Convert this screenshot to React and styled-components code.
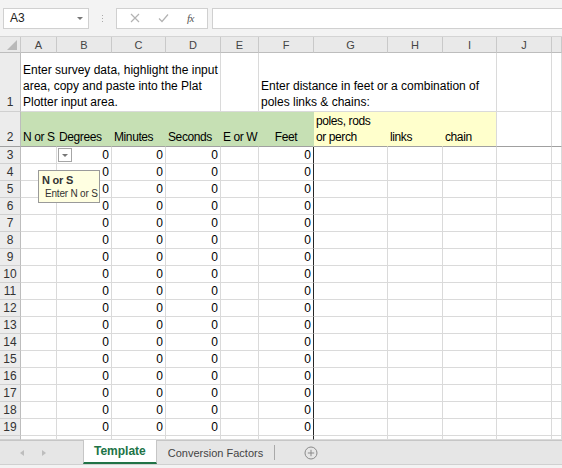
import styled, { createGlobalStyle } from 'styled-components'

const GlobalStyle = createGlobalStyle`
  html, body { margin: 0; padding: 0; background: #fff; }
  body { font-family: "Liberation Sans", Arial, sans-serif; }
`;

const Window = styled.div`
  width: 562px;
  height: 468px;
  overflow: hidden;
  display: flex;
  flex-direction: column;
  background: #fff;
`;

// ---- formula bar ----
const FormulaBar = styled.div`
  height: 37px;
  flex: none;
  box-sizing: border-box;
  background: #f3f3f3;
  border-bottom: 1px solid #d4d4d4;
  display: flex;
  align-items: center;
  padding-left: 3px;
`;

const NameBox = styled.div`
  width: 86px;
  height: 21px;
  box-sizing: border-box;
  background: #fff;
  border: 1px solid #d0d0d0;
  display: flex;
  align-items: center;
  justify-content: space-between;
  padding: 0 5px 0 6px;
  font-size: 12px;
  color: #222;
`;

const Caret = styled.span`
  width: 0;
  height: 0;
  border-left: 3px solid transparent;
  border-right: 3px solid transparent;
  border-top: 3px solid #777;
`;

const Grip = styled.div`
  width: 27px;
  display: flex;
  flex-direction: column;
  align-items: center;
  gap: 2px;
  span { width: 1px; height: 1px; background: #aaa; }
`;

const FxBox = styled.div`
  width: 92px;
  height: 21px;
  box-sizing: border-box;
  background: #fff;
  border: 1px solid #d0d0d0;
  display: flex;
  align-items: center;
  justify-content: space-around;
  padding: 0 4px;
`;

const FxLabel = styled.span`
  font-family: "Liberation Serif", serif;
  font-style: italic;
  font-size: 11px;
  color: #555;
  letter-spacing: -0.5px;
`;

const FormulaInput = styled.div`
  flex: 1;
  height: 21px;
  margin-left: 4px;
  box-sizing: border-box;
  background: #fff;
  border: 1px solid #d0d0d0;
  border-right: none;
`;

// ---- sheet grid ----
const Sheet = styled.div`
  position: relative;
  flex: 1;
  display: grid;
  grid-template-columns: 21px 36px 55px 54px 55px 38px 55px 74px 55px 54px 55px 1fr;
  grid-template-rows: 16px 59px 35px repeat(17, 17px) 1fr;
  overflow: hidden;
  font-size: 12px;
`;

const ColHead = styled.div`
  box-sizing: border-box;
  background: #e9e9e9;
  border-right: 1px solid #c9c9c9;
  border-bottom: 1px solid #bdbdbd;
  display: flex;
  align-items: center;
  justify-content: center;
  font-size: 11px;
  color: #444;
`;

const Corner = styled(ColHead)`
  justify-content: flex-end;
  align-items: flex-end;
  padding: 0 3px 2px 0;
`;

const CornerTri = styled.span`
  width: 0;
  height: 0;
  border-left: 10px solid transparent;
  border-bottom: 10px solid #b9b9b9;
`;

const RowHead = styled.div`
  box-sizing: border-box;
  background: #ececec;
  border-right: 1px solid #bdbdbd;
  border-bottom: 1px solid ${p => (p.$freeze ? '#a0a0a0' : '#d0d0d0')};
  display: flex;
  align-items: ${p => (p.$bottom ? 'flex-end' : 'center')};
  justify-content: center;
  padding-bottom: ${p => (p.$bottom ? '1px' : '0')};
  line-height: 16px;
  color: #333;
`;

const Cell = styled.div`
  grid-column: span ${p => p.$span || 1};
  box-sizing: border-box;
  min-width: 0;
  background: ${p => p.$fill || '#fff'};
  border-right: 1px solid ${p => p.$edge || p.$fill || '#dadada'};
  border-bottom: 1px solid ${p => (p.$freeze ? '#a0a0a0' : p.$fill || '#dadada')};
  display: flex;
  flex-direction: column;
  justify-content: ${p => (p.$middle ? 'center' : 'flex-end')};
  align-items: ${p => p.$align || 'flex-start'};
  padding: 0 2px 1px 2px;
  line-height: 16px;
  letter-spacing: ${p => (p.$tight ? '-0.4px' : 'normal')};
  color: #000;
  white-space: nowrap;
  overflow: visible;
`;

const ValidationArrow = styled.div`
  position: absolute;
  left: 58px;
  top: 111px;
  width: 14px;
  height: 14px;
  box-sizing: border-box;
  background: #fff;
  border: 1px solid #a6a6a6;
  display: flex;
  align-items: center;
  justify-content: center;
`;

const Tooltip = styled.div`
  position: absolute;
  left: 38px;
  top: 133px;
  width: 62px;
  height: 33px;
  box-sizing: border-box;
  background: #ffffe1;
  border: 1px solid #9a9a9a;
  padding: 2px 0 0 3px;
  font-size: 10px;
  line-height: 14px;
  letter-spacing: -0.2px;
  color: #333;
  white-space: nowrap;
`;

const TipTitle = styled.div`
  font-weight: bold;
  font-size: 11px;
`;

const TipBody = styled.div`
  padding-left: 3px;
`;

// ---- sheet tabs ----
const TabBar = styled.div`
  height: 24px;
  flex: none;
  box-sizing: border-box;
  background: #e6e6e6;
  border-top: 1px solid #c6c6c6;
  display: flex;
  align-items: stretch;
`;

const NavArrows = styled.div`
  width: 83px;
  display: flex;
  align-items: center;
  padding-left: 20px;
  gap: 18px;
  box-sizing: border-box;
  span {
    width: 0;
    height: 0;
    border-top: 3px solid transparent;
    border-bottom: 3px solid transparent;
  }
  span:first-child { border-right: 4px solid #bdbdbd; }
  span:last-child { border-left: 4px solid #bdbdbd; }
`;

const Tab = styled.div`
  box-sizing: border-box;
  padding: 0 ${p => (p.$active ? '10px' : '11px')};
  margin-top: -1px;
  display: flex;
  align-items: center;
  font-size: ${p => (p.$active ? '12px' : '11px')};
  background: ${p => (p.$active ? '#fff' : 'transparent')};
  color: ${p => (p.$active ? '#217346' : '#444')};
  font-weight: ${p => (p.$active ? 'bold' : 'normal')};
  border-left: ${p => (p.$active ? '1px solid #c6c6c6' : 'none')};
  border-right: 1px solid ${p => (p.$active ? '#c6c6c6' : '#b0b0b0')};
  border-bottom: ${p => (p.$active ? '2px solid #217346' : 'none')};
  ${p => !p.$active && 'margin: 4px 0 4px; border-right: 1px solid #a9a9a9;'}
`;

const AddSheet = styled.div`
  margin-left: 29px;
  display: flex;
  align-items: center;
`;

const BottomStrip = styled.div`
  height: 3px;
  flex: none;
  background: #f3f3f3;
  border-top: 1px solid #d0d0d0;
`;

const cols = ['A', 'B', 'C', 'D', 'E', 'F', 'G', 'H', 'I', 'J', ''];
const GREEN = '#c6e0b4';
const YELLOW = '#ffffcc';

const header2 = [
  { t: 'N or S', fill: GREEN },
  { t: 'Degrees', fill: GREEN },
  { t: 'Minutes', fill: GREEN },
  { t: 'Seconds', fill: GREEN },
  { t: 'E or W', fill: GREEN },
  { t: 'Feet', fill: GREEN, align: 'center', edge: GREEN },
  { t: ['poles, rods', 'or perch'], fill: YELLOW },
  { t: 'links', fill: YELLOW },
  { t: 'chain', fill: YELLOW, edge: '#dadada' },
  { t: '' },
  { t: '' },
];

const dataRows = Array.from({ length: 17 }, (_, i) => i + 3);

function DataRow({ n }) {
  return (
    <>
      <RowHead>{n}</RowHead>
      {cols.map((c, i) => {
        const zero = ['B', 'C', 'D', 'F'].includes(c);
        return (
          <Cell key={i} $middle $align="flex-end" $edge={c === 'F' ? '#262626' : undefined}>
            {zero ? '0' : ''}
          </Cell>
        );
      })}
    </>
  );
}

export default function App() {
  return (
    <Window>
      <GlobalStyle />
      <FormulaBar>
        <NameBox>
          A3
          <Caret />
        </NameBox>
        <Grip><span /><span /><span /></Grip>
        <FxBox>
          <svg width="10" height="10" viewBox="0 0 10 10">
            <path d="M1 1 L9 9 M9 1 L1 9" stroke="#b3b3b3" strokeWidth="1.2" fill="none" />
          </svg>
          <svg width="11" height="10" viewBox="0 0 11 10">
            <path d="M1 5.5 L4 8.5 L10 1.5" stroke="#b3b3b3" strokeWidth="1.2" fill="none" />
          </svg>
          <FxLabel>fx</FxLabel>
        </FxBox>
        <FormulaInput />
      </FormulaBar>

      <Sheet>
        <Corner><CornerTri /></Corner>
        {cols.map((c, i) => (
          <ColHead key={i}>{c}</ColHead>
        ))}

        <RowHead $bottom>1</RowHead>
        <Cell $span={4}>
          <span>Enter survey data, highlight the input</span>
          <span>area, copy and paste into the Plat</span>
          <span>Plotter input area.</span>
        </Cell>
        <Cell />
        <Cell $span={4}>
          <span>Enter distance in feet or a combination of</span>
          <span>poles links &amp; chains:</span>
        </Cell>
        <Cell />
        <Cell />

        <RowHead $bottom $freeze>2</RowHead>
        {header2.map((h, i) => (
          <Cell key={i} $fill={h.fill} $edge={h.edge} $align={h.align} $tight $freeze>
            {Array.isArray(h.t) ? h.t.map(l => <span key={l}>{l}</span>) : h.t}
          </Cell>
        ))}

        {dataRows.map(n => (
          <DataRow key={n} n={n} />
        ))}

        <RowHead />
        {cols.map((c, i) => (
          <Cell key={i} $edge={c === 'F' ? '#262626' : undefined} />
        ))}

        <ValidationArrow>
          <Caret />
        </ValidationArrow>
        <Tooltip>
          <TipTitle>N or S</TipTitle>
          <TipBody>Enter N or S</TipBody>
        </Tooltip>
      </Sheet>

      <TabBar>
        <NavArrows><span /><span /></NavArrows>
        <Tab $active>Template</Tab>
        <Tab>Conversion Factors</Tab>
        <AddSheet>
          <svg width="14" height="14" viewBox="0 0 14 14">
            <circle cx="7" cy="7" r="6" stroke="#8a8a8a" strokeWidth="1" fill="none" />
            <path d="M7 3.8 V10.2 M3.8 7 H10.2" stroke="#8a8a8a" strokeWidth="1" />
          </svg>
        </AddSheet>
      </TabBar>
      <BottomStrip />
    </Window>
  );
}
